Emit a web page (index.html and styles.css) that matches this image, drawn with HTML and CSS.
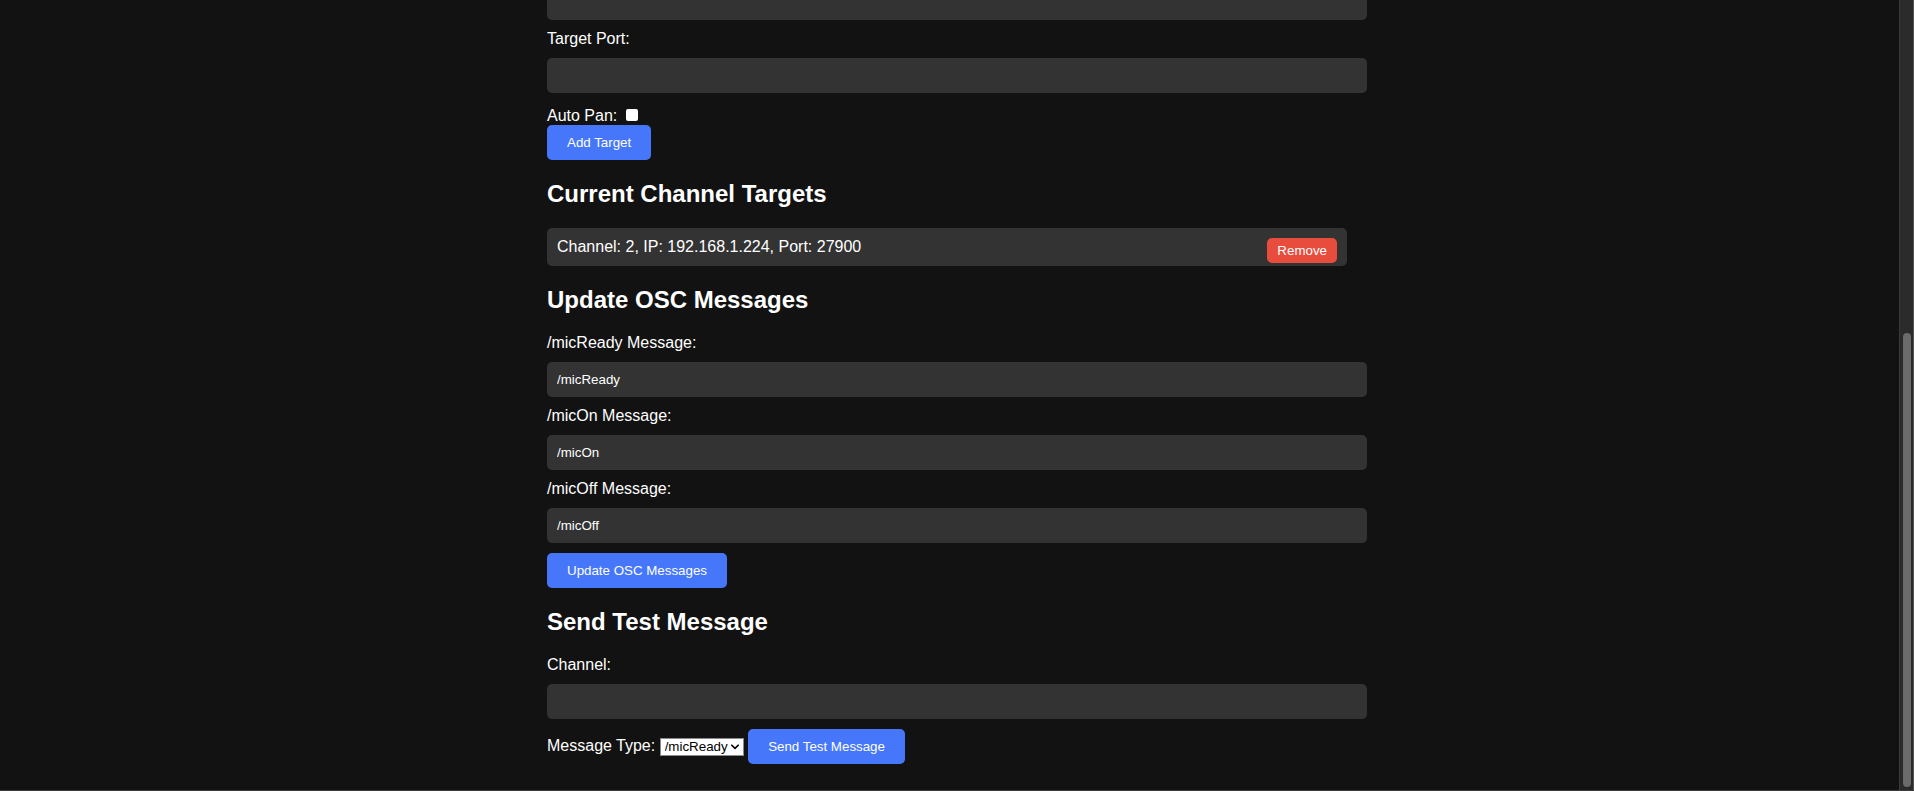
FILE: index.html
```html
<!DOCTYPE html>
<html lang="en">
<head>
<meta charset="utf-8">
<title>OSC Channel Targets</title>
<link rel="stylesheet" href="styles.css">
</head>
<body>
<div class="window">
  <main class="page">
    <div class="container">
      <input class="field" type="text">
      <label class="label">Target Port:</label>
      <input class="field" type="text">
      <div class="line">
        <label class="inline-label">Auto Pan:</label> <input class="check" type="checkbox">
      </div>
      <div class="line">
        <button class="btn">Add Target</button>
      </div>

      <h2 class="section-title">Current Channel Targets</h2>
      <ul class="targets">
        <li class="target">Channel: 2, IP: 192.168.1.224, Port: 27900<button class="btn-remove">Remove</button></li>
      </ul>

      <h2 class="section-title">Update OSC Messages</h2>
      <label class="label">/micReady Message:</label>
      <input class="field" type="text" value="/micReady">
      <label class="label">/micOn Message:</label>
      <input class="field" type="text" value="/micOn">
      <label class="label">/micOff Message:</label>
      <input class="field" type="text" value="/micOff">
      <div class="line">
        <button class="btn">Update OSC Messages</button>
      </div>

      <h2 class="section-title">Send Test Message</h2>
      <label class="label">Channel:</label>
      <input class="field" type="text">
      <div class="line">
        <label class="inline-label">Message Type:</label>
        <span class="select-wrap"><select class="select">
            <option>/micReady</option>
            <option>/micOn</option>
            <option>/micOff</option>
          </select><svg class="chev" width="8" height="6" viewBox="0 0 8 6" aria-hidden="true"><path d="M0.8 1.2 L4 4.4 L7.2 1.2" fill="none" stroke="#000" stroke-width="1.6" stroke-linecap="round" stroke-linejoin="round"/></svg></span>
        <button class="btn">Send Test Message</button>
      </div>
    </div>
  </main>
  <div class="scrollbar"><div class="thumb"></div></div>
</div>
</body>
</html>
```

FILE: styles.css
```css
html, body {
  margin: 0;
  padding: 0;
  height: 791px;
  overflow: hidden;
  background: #121212;
}

body {
  font-family: "Liberation Sans", Arial, sans-serif;
  font-size: 16px;
  color: #ffffff;
}

.window {
  display: flex;
  height: 790px;
  border-bottom: 1px solid #3c3c3c;
}

.page {
  flex: 1;
  overflow: hidden;
  padding-right: 5px;
}

/* page is scrolled to its end: the first field is partly above the fold */
.container {
  width: 800px;
  margin: -24.6px auto 0;
}

.field {
  display: block;
  width: 100%;
  margin: 10px 0;
  padding: 10px;
  border: none;
  border-radius: 5px;
  background: #333333;
  color: #ffffff;
  font-family: "Liberation Sans", Arial, sans-serif;
  font-size: 13.333px;
  line-height: normal;
  outline: none;
}

.label {
  display: block;
}

.line {
  display: block;
}

.inline-label {
  display: inline;
}

.check {
  appearance: none;
  -webkit-appearance: none;
  width: 12px;
  height: 12px;
  margin: 6px 3px 3px 4px;
  background: #ffffff;
  border-radius: 2px;
  vertical-align: -3px;
}

.btn {
  display: inline-block;
  margin: 0;
  padding: 10px 20px;
  border: none;
  border-radius: 5px;
  background: #4677fb;
  color: #ffffff;
  font-family: "Liberation Sans", Arial, sans-serif;
  font-size: 13.333px;
  line-height: normal;
}

.section-title {
  font-size: 24px;
  font-weight: bold;
  margin: 19.92px 0;
  line-height: normal;
}

.targets {
  list-style: none;
  margin: 0;
  padding: 0;
}

.target {
  background: #333333;
  padding: 10px;
  border-radius: 5px;
}

.btn-remove {
  float: right;
  margin: 0;
  padding: 5px 10px;
  border: none;
  border-radius: 5px;
  background: #e74c3c;
  color: #ffffff;
  font-family: "Liberation Sans", Arial, sans-serif;
  font-size: 13.333px;
  line-height: normal;
}

.select-wrap {
  display: inline-flex;
  align-items: center;
  box-sizing: border-box;
  width: 84px;
  height: 18px;
  background: #ffffff;
  border: 1px solid #8a8a8a;
  padding-right: 4px;
}

.select {
  appearance: none;
  -webkit-appearance: none;
  flex: 1;
  min-width: 0;
  height: 16px;
  margin: 0;
  padding: 0 0 0 4px;
  border: none;
  background: transparent;
  color: #000000;
  font-family: "Liberation Sans", Arial, sans-serif;
  font-size: 13.333px;
  line-height: 16px;
  outline: none;
}

.chev {
  flex: none;
  display: block;
}

.scrollbar {
  width: 8px;
  flex: none;
  display: flex;
  flex-direction: column;
  padding: 333px 2px 3px 3px;
  background: #2b2b2b;
  border-left: 1px solid #3a3a3a;
  border-right: 1px solid #555555;
}

.thumb {
  flex: 1;
  background: #6b6b6b;
  border-radius: 4px;
}
```
